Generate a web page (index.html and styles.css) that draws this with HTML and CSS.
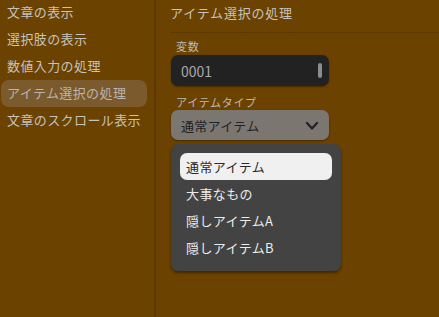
FILE: index.html
```html
<!DOCTYPE html>
<html lang="ja">
<head>
    <meta charset="UTF-8">
    <meta name="viewport" content="width=device-width, initial-scale=1.0">
    <title>アイテム選択の処理</title>

    <link rel="stylesheet" href="styles.css">
</head>

<body>
    <div class="app">
        <!-- Left menu -->
        <div class="sidebar">
            <div class="menu-item">文章の表示</div>
            <div class="menu-item">選択肢の表示</div>
            <div class="menu-item">数値入力の処理</div>
            <div class="menu-item active">アイテム選択の処理</div>
            <div class="menu-item">文章のスクロール表示</div>
        </div>

        <!-- Main panel -->
        <div class="main">
            <h1 class="title">アイテム選択の処理</h1>

            <div class="form">
                <label class="field-label">変数</label>
                <div class="number-box">
                    <span>0001</span>
                    <span class="handle"></span>
                </div>

                <label class="field-label">アイテムタイプ</label>
                <div class="select-wrap">
                    <div class="select-box">
                        <span>通常アイテム</span>
                        <svg class="chevron" width="14" height="10" viewBox="0 0 14 10">
                            <path d="M2 2 L7 7.5 L12 2" fill="none" stroke="#222" stroke-width="2.2" stroke-linecap="round" stroke-linejoin="round"/>
                        </svg>
                    </div>

                    <!-- Open dropdown list -->
                    <div class="dropdown">
                        <div class="option selected">通常アイテム</div>
                        <div class="option">大事なもの</div>
                        <div class="option">隠しアイテムA</div>
                        <div class="option">隠しアイテムB</div>
                    </div>
                </div>
            </div>
        </div>
    </div>
</body>
</html>
```

FILE: styles.css
```css
* {
    padding: 0;
    margin: 0;
    box-sizing: border-box;
}

:root {
    --background-color: #6b4200;
    --line-color: #5d3900;
    --text-color: #c6c2bc;
}

body {
    background-color: var(--background-color);
    color: var(--text-color);
    font-family: "Noto Sans CJK JP", "Noto Sans", sans-serif;
    font-size: 13px;
    overflow: hidden;
}

.app {
    display: flex;
    height: 317px;
}

/* Left menu */
.sidebar {
    width: 156px;
    flex-shrink: 0;
    padding: 0 7px 0 1px;
    border-right: 2px solid var(--line-color);
}

.menu-item {
    height: 27px;
    line-height: 26px;
    padding-left: 6px;
    border-radius: 8px;
    letter-spacing: 0.4px;
}

.menu-item:first-child {
    margin-top: -1px;
}

.menu-item.active {
    background-color: #7b5a2e;
    color: #bab5ae;
}

/* Main panel */
.main {
    flex: 1;
    padding-left: 14px;
}

.title {
    font-size: 13px;
    font-weight: normal;
    letter-spacing: 0.8px;
    height: 33px;
    line-height: 25px;
    border-bottom: 1px solid var(--line-color);
}

.form {
    padding: 6px 0 0 1px;
    width: 170px;
}

.field-label {
    display: block;
    font-size: 11px;
    letter-spacing: 0.7px;
    line-height: 14px;
    padding-left: 5px;
    color: #bdb8b0;
}

.number-box {
    display: flex;
    justify-content: space-between;
    align-items: center;
    width: 158px;
    height: 31px;
    margin: 2px 0 9px;
    padding: 0 7px 0 10px;
    background-color: #232222;
    border-radius: 7px;
    box-shadow: 0 1px 2px rgba(0, 0, 0, 0.35);
    color: #a9a9a9;
    font-size: 14px;
}

.handle {
    width: 4px;
    height: 15px;
    background-color: #8c8c8c;
    border-radius: 2px;
}

.select-wrap {
    margin-top: 1px;
}

.select-box {
    display: flex;
    justify-content: space-between;
    align-items: center;
    width: 158px;
    height: 30px;
    padding: 0 10px;
    background-color: #7b7770;
    border-radius: 7px;
    box-shadow: 0 1px 2px rgba(0, 0, 0, 0.35);
    color: #222;
    letter-spacing: 0.3px;
}

.chevron {
    margin-top: 2px;
}

.dropdown {
    width: 170px;
    margin-top: 4px;
    padding: 9px 9px 10px;
    background-color: #434343;
    border-radius: 7px;
    box-shadow: 0 2px 3px rgba(0, 0, 0, 0.4);
}

.option {
    height: 27px;
    line-height: 27px;
    padding-left: 6px;
    color: #ececec;
    border-radius: 7px;
    letter-spacing: 0.4px;
}

.option.selected {
    background-color: #f0f0f0;
    color: #2a2a2a;
}
```
